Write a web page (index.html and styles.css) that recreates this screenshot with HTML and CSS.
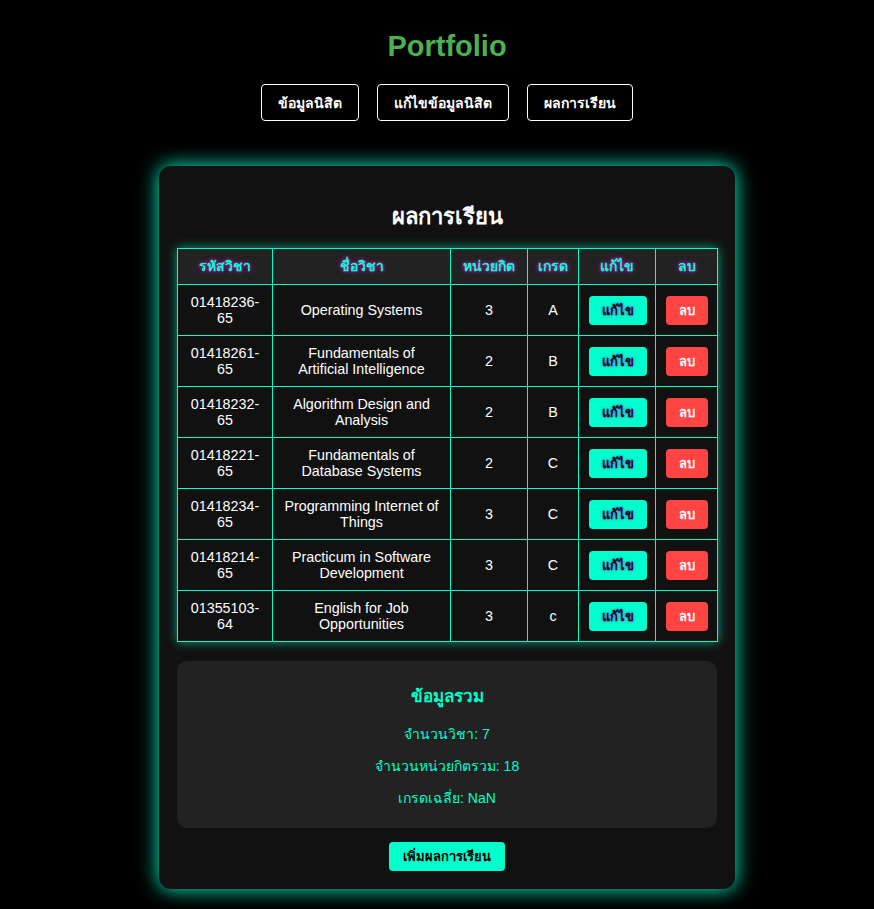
FILE: index.html
```html
<!DOCTYPE html>
<html lang="th">
<head>
<meta charset="utf-8">
<title>Portfolio</title>
<link rel="stylesheet" href="styles.css">
</head>
<body>
<header class="top">
  <h1 class="brand">Portfolio</h1>
  <nav class="nav">
    <button class="nav-btn">ข้อมูลนิสิต</button>
    <button class="nav-btn">แก้ไขข้อมูลนิสิต</button>
    <button class="nav-btn">ผลการเรียน</button>
  </nav>
</header>
<main class="card">
  <h2 class="card-title">ผลการเรียน</h2>
  <table class="grades">
    <colgroup>
      <col class="c-code"><col class="c-name"><col class="c-credit"><col class="c-grade"><col class="c-edit"><col class="c-del">
    </colgroup>
    <thead>
      <tr><th>รหัสวิชา</th><th>ชื่อวิชา</th><th>หน่วยกิต</th><th>เกรด</th><th>แก้ไข</th><th>ลบ</th></tr>
    </thead>
    <tbody>
      <tr><td>01418236-65</td><td>Operating Systems</td><td>3</td><td>A</td><td><button class="btn-edit">แก้ไข</button></td><td><button class="btn-del">ลบ</button></td></tr>
      <tr><td>01418261-65</td><td>Fundamentals of Artificial Intelligence</td><td>2</td><td>B</td><td><button class="btn-edit">แก้ไข</button></td><td><button class="btn-del">ลบ</button></td></tr>
      <tr><td>01418232-65</td><td>Algorithm Design and Analysis</td><td>2</td><td>B</td><td><button class="btn-edit">แก้ไข</button></td><td><button class="btn-del">ลบ</button></td></tr>
      <tr><td>01418221-65</td><td>Fundamentals of Database Systems</td><td>2</td><td>C</td><td><button class="btn-edit">แก้ไข</button></td><td><button class="btn-del">ลบ</button></td></tr>
      <tr><td>01418234-65</td><td>Programming Internet of Things</td><td>3</td><td>C</td><td><button class="btn-edit">แก้ไข</button></td><td><button class="btn-del">ลบ</button></td></tr>
      <tr><td>01418214-65</td><td>Practicum in Software Development</td><td>3</td><td>C</td><td><button class="btn-edit">แก้ไข</button></td><td><button class="btn-del">ลบ</button></td></tr>
      <tr><td>01355103-64</td><td>English for Job Opportunities</td><td>3</td><td>c</td><td><button class="btn-edit">แก้ไข</button></td><td><button class="btn-del">ลบ</button></td></tr>
    </tbody>
  </table>
  <section class="summary">
    <h3 class="summary-title">ข้อมูลรวม</h3>
    <p class="summary-line">จำนวนวิชา: 7</p>
    <p class="summary-line">จำนวนหน่วยกิตรวม: 18</p>
    <p class="summary-line">เกรดเฉลี่ย: NaN</p>
  </section>
  <div class="actions">
    <button class="btn-add">เพิ่มผลการเรียน</button>
  </div>
</main>
</body>
</html>
```

FILE: styles.css
```css
* { box-sizing: border-box; }

body {
  margin: 0;
  background: #000;
  color: #fff;
  font-family: "Liberation Sans", Arial, sans-serif;
  padding: 0 0 20px 20px;
}

.top {
  display: flex;
  flex-direction: column;
  align-items: center;
  padding-top: 29px;
}

.brand {
  margin: 0;
  font-size: 29px;
  line-height: 35px;
  color: #4caf50;
  font-weight: bold;
}

.nav {
  display: flex;
  gap: 18px;
  margin-top: 20px;
}

.nav-btn {
  background: #000;
  color: #fff;
  border: 1px solid #fff;
  border-radius: 4px;
  height: 37px;
  padding: 0 16px;
  font-family: "Liberation Sans", Arial, sans-serif;
  font-size: 14px;
  font-weight: bold;
}

.card {
  width: 576px;
  margin: 45px auto 0;
  background: #111;
  border-radius: 12px;
  padding: 18px;
  box-shadow: 0 0 20px #00ffcc;
  display: flex;
  flex-direction: column;
  align-items: stretch;
}

.card-title {
  margin: 20px 0 18px;
  text-align: center;
  font-size: 22px;
  line-height: 26px;
  font-weight: bold;
}

.grades {
  width: 540px;
  border-collapse: collapse;
  table-layout: fixed;
  box-shadow: 0 0 10px rgba(0, 255, 204, 0.6);
}

.c-code { width: 95px; }
.c-name { width: 178px; }
.c-credit { width: 77px; }
.c-grade { width: 51px; }
.c-edit { width: 77px; }
.c-del { width: 62px; }

.grades th,
.grades td {
  border: 1px solid #00ffcc;
  text-align: center;
  font-size: 14px;
  line-height: 16px;
}

.grades th {
  background: #222;
  color: #00ffcc;
  font-weight: bold;
  padding: 9px 4px 10px;
  text-shadow: 0 0 4px #ff00ff;
}

.grades td {
  background: #111;
  color: #fff;
  font-size: 14.3px;
  padding: 9px 10px;
  height: 51px;
}

.btn-edit,
.btn-del {
  border: none;
  border-radius: 4px;
  font-family: "Liberation Sans", Arial, sans-serif;
  font-size: 13px;
  font-weight: bold;
  height: 29px;
  padding: 0;
  vertical-align: middle;
}

.btn-edit {
  width: 58px;
  background: #00ffcc;
  color: #111;
  text-shadow: 0 0 3px #8a2be2;
}

.btn-del {
  width: 42px;
  background: #ff4444;
  color: #fff;
}

.summary {
  margin-top: 19px;
  background: #222;
  border-radius: 10px;
  padding: 26px 20px 22px;
  display: flex;
  flex-direction: column;
  align-items: center;
  gap: 16px;
}

.summary-title {
  margin: 0 0 3px;
  font-size: 17px;
  line-height: 20px;
  color: #00ffcc;
  font-weight: bold;
}

.summary-line {
  margin: 0;
  font-size: 14px;
  line-height: 16px;
  color: #00ffcc;
}

.actions {
  display: flex;
  justify-content: center;
  margin-top: 14px;
}

.btn-add {
  background: #00ffcc;
  color: #000;
  border: none;
  border-radius: 4px;
  height: 29px;
  padding: 0 14px;
  font-family: "Liberation Sans", Arial, sans-serif;
  font-size: 13px;
  font-weight: bold;
}
```
